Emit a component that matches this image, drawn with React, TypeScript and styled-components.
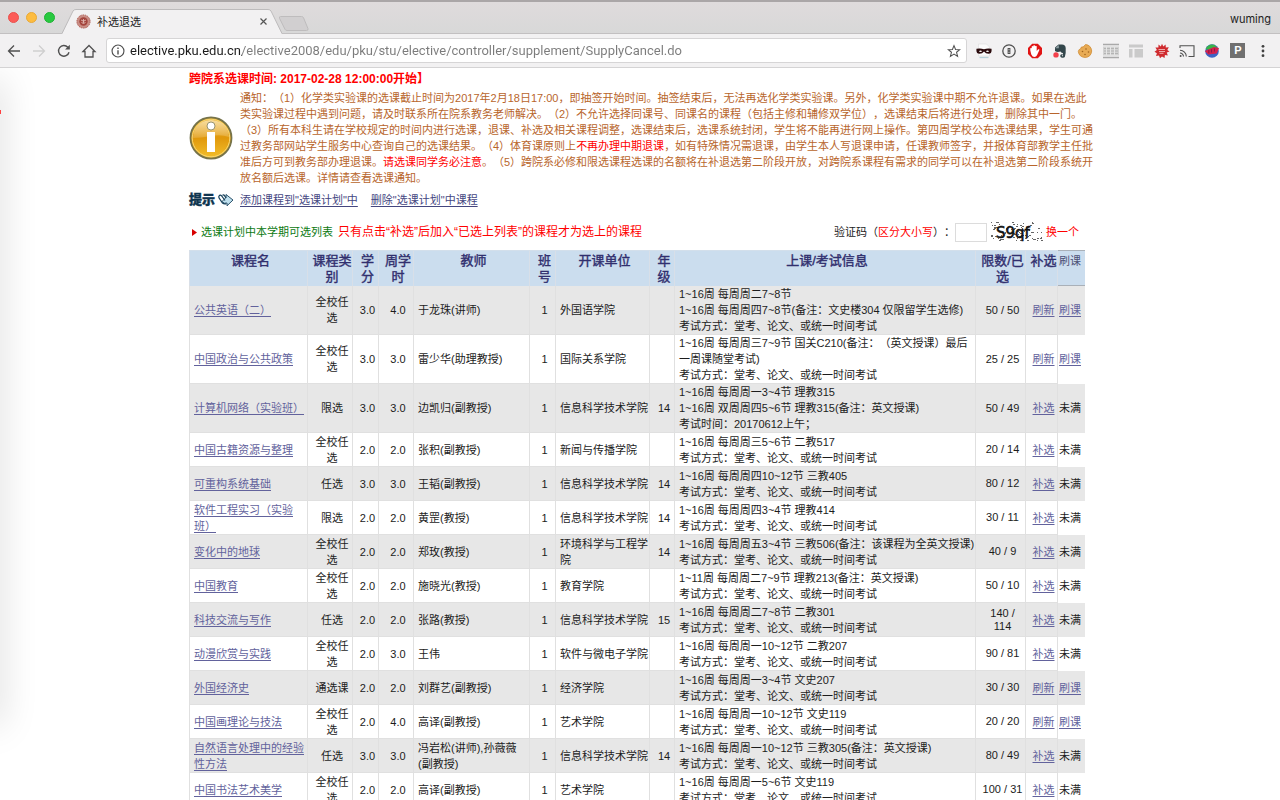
import React from "react";
import styled, { createGlobalStyle, css } from "styled-components";

const GlobalStyle = createGlobalStyle`
  *, *::before, *::after { box-sizing: border-box; }
  html, body { margin: 0; background: #fff; }
  body {
    font-family: "Liberation Sans", "Noto Sans CJK SC", sans-serif;
    font-size: 11px;
    line-height: 16px;
    color: #1c1c1c;
    text-spacing-trim: space-all;
  }
`;

/* ---------- browser window ---------- */

const Window = styled.div`
  display: flex;
  flex-direction: column;
  height: 100vh;
  overflow: hidden;
`;

const TabStrip = styled.div`
  display: flex;
  align-items: flex-end;
  height: 34px;
  flex: none;
  padding: 0 9px 0 8px;
  background: linear-gradient(#dfdbdc, #d8d8d8);
  border-top: 2px solid #aaa6a7;
  border-bottom: 1px solid #c2c0c1;
`;

const Lights = styled.div`
  display: flex;
  gap: 7px;
  align-self: center;
  width: 54px;
`;

const Light = styled.button<{ $color: string; $edge: string }>`
  width: 11px;
  height: 11px;
  padding: 0;
  border-radius: 50%;
  border: 1px solid ${(p) => p.$edge};
  background: ${(p) => p.$color};
`;

const Tab = styled.div`
  position: relative;
  display: flex;
  align-items: center;
  width: 222px;
  height: 25px;
  margin-bottom: -1px;
  padding: 0 17px 0 14px;
`;

const TabShape = styled.svg`
  position: absolute;
  inset: 0;
`;

const TabTitle = styled.span`
  position: relative;
  flex: 1;
  margin-left: 6px;
  font-size: 11px;
  color: #222;
`;

const Favicon = styled.svg`
  position: relative;
  flex: none;
`;

const PlainButton = styled.button`
  position: relative;
  display: flex;
  align-items: center;
  justify-content: center;
  padding: 0;
  border: 0;
  background: none;
  color: #505050;
`;

const NewTab = styled(PlainButton)`
  align-self: center;
  margin-left: -6px;
  margin-top: 12px;
`;

const Profile = styled(PlainButton)`
  align-self: center;
  margin-left: auto;
  margin-top: 2px;
  font: 11px/16px Inter, "Liberation Sans", sans-serif;
  color: #222;
`;

const Toolbar = styled.div`
  display: flex;
  align-items: center;
  height: 34px;
  flex: none;
  padding: 0 4px 0 1px;
  background: #f2f1f2;
  border-bottom: 1px solid #d4d3d4;
`;

const NavButtons = styled.div`
  display: grid;
  grid-template-columns: repeat(4, 25px);
  margin-right: 5px;
`;

const Address = styled.div`
  display: flex;
  align-items: center;
  flex: 1;
  gap: 5px;
  height: 25px;
  margin-right: 4px;
  padding: 0 5px 0 4px;
  border: 1px solid #d6d5d6;
  border-radius: 3px;
  background: #fff;
`;

const Url = styled.input`
  flex: 1;
  min-width: 0;
  height: 20px;
  padding: 0;
  border: 0;
  outline: 0;
  font: 13px/20px Roboto, "Liberation Sans", sans-serif;
  color: #777;
  background: linear-gradient(90deg, #1a1a1a 112px, #7b7b7b 112px);
  background-clip: text;
  -webkit-text-fill-color: transparent;
`;

const Extensions = styled.div`
  display: grid;
  grid-template-columns: repeat(12, 1fr);
  width: 305px;
`;

/* ---------- page ---------- */

const Viewport = styled.main`
  position: relative;
  flex: 1;
  min-height: 0;
  overflow: hidden;
  padding: 0 6px 0 0;
`;

const DrawerShadow = styled.div`
  position: absolute;
  left: -20px;
  top: 12px;
  bottom: 75px;
  width: 20px;
  box-shadow: 0 0 36px rgba(0, 0, 0, 0.17);
`;

const DrawerEdge = styled.div`
  position: absolute;
  left: 0;
  top: 42px;
  width: 1px;
  height: 4px;
  background: #ff4040;
`;

const Content = styled.div`
  max-width: 896px;
  margin: 0 auto;
`;

const OpeningTime = styled.h2`
  margin: 0;
  font-size: 12px;
  line-height: 22px;
  font-weight: bold;
  color: #f00;
`;

const Notice = styled.section`
  display: flex;
  align-items: center;
  gap: 7px;
`;

const NoticeIcon = styled.svg`
  flex: none;
`;

const NoticeText = styled.p`
  margin: 0;
  white-space: nowrap;
  color: #b8652b;
`;

const Warn = styled.span`
  color: #f00;
`;

const TipRow = styled.section`
  display: flex;
  align-items: center;
  height: 28px;
`;

const TipLabel = styled.strong`
  font-size: 13px;
  font-weight: 900;
  color: #0f3550;
  -webkit-text-stroke: 0.4px #0f3550;
`;

const TipHand = styled.svg`
  margin: 0 6px 0 3px;
`;

const Link = styled.a`
  color: #62629c;
  text-decoration: underline;
  text-underline-offset: 2px;
`;

const PlanLink = styled(Link)`
  margin-right: 13px;
  color: #44467f;
`;

const ListHead = styled.section`
  display: flex;
  align-items: center;
  height: 36px;
  padding: 0 6px 0 3px;
`;

const ListTitle = styled.h3`
  margin: 0 5px 0 4px;
  font-size: 11px;
  font-weight: normal;
  color: #0c7a12;
`;

const ListHint = styled.span`
  font-size: 12px;
  color: #f00;
`;

const Captcha = styled.form`
  display: flex;
  align-items: center;
  margin-left: auto;
`;

const CaptchaInput = styled.input`
  width: 32px;
  height: 19px;
  margin-right: 4px;
  padding: 0 2px;
  border: 1px solid #dcdcdc;
  font: inherit;
`;

const CaptchaSwap = styled.a`
  margin-left: 3px;
  color: #f00;
  text-decoration: none;
`;

const CourseTable = styled.table`
  width: 100%;
  table-layout: fixed;
  border-collapse: separate;
  border-spacing: 0;
`;

const HeadCell = styled.th<{ $plain?: boolean }>`
  height: 36px;
  padding: 2px 0 1px 4px;
  vertical-align: top;
  font-size: 13px;
  line-height: 16px;
  font-weight: 400;
  color: #312f6e;
  background: #cbddee;
  border-right: 1px solid #d8dfe8;
  border-top: 1px solid #d3dfeb;
  -webkit-text-stroke: 0.4px #312f6e;
  &:first-child { border-left: 1px solid #d8dfe8; }
  ${(p) =>
    p.$plain &&
    css`
      padding: 2px 1px 1px;
      font-size: 11px;
      text-align: left;
      color: #4c4f75;
      -webkit-text-stroke: 0;
      border-top: 1px solid #a9b0b8;
      border-bottom: 1px solid #a9b0b8;
      border-right: 0;
    `}
`;

const Row = styled.tr`
  background: #fff;
  &:nth-child(odd) { background: #e7e7e7; }
`;

const Cell = styled.td<{ $align?: "center"; $bare?: boolean }>`
  height: 34px;
  padding: 0 0 0 4px;
  vertical-align: middle;
  text-align: ${(p) => p.$align ?? "left"};
  border-right: 1px solid #e0e0e0;
  border-bottom: 1px solid #e0e0e0;
  &:first-child { border-left: 1px solid #e0e0e0; }
  ${(p) =>
    p.$bare &&
    css`
      padding: 0 1px;
      border-right: 0;
      border-bottom-color: transparent;
    `}
`;

const QuotaCell = styled(Cell)`
  line-height: 13px;
`;

const Line = styled.div`
  white-space: nowrap;
`;

/* ---------- data ---------- */

const columns: [string, number][] = [
  ["课程名", 119],
  ["课程类别", 45],
  ["学分", 26],
  ["周学时", 35],
  ["教师", 116],
  ["班号", 26],
  ["开课单位", 94],
  ["年级", 25],
  ["上课/考试信息", 301],
  ["限数/已选", 50],
  ["补选", 32],
  ["刷课", 27],
];

const EXAM = "考试方式：堂考、论文、或统一时间考试";

type Course = {
  name: string;
  kind: string;
  credit: string;
  hours: string;
  teacher: string;
  unit: string;
  grade?: string;
  info: string[];
  quota: string;
  full?: boolean;
};

const courses: Course[] = [
  { name: "公共英语（二）", kind: "全校任选", credit: "3.0", hours: "4.0", teacher: "于龙珠(讲师)", unit: "外国语学院", info: ["1~16周 每周周二7~8节", "1~16周 每周周四7~8节(备注：文史楼304 仅限留学生选修)", EXAM], quota: "50 / 50", full: true },
  { name: "中国政治与公共政策", kind: "全校任选", credit: "3.0", hours: "3.0", teacher: "雷少华(助理教授)", unit: "国际关系学院", info: ["1~16周 每周周三7~9节 国关C210(备注：（英文授课）最后", "一周课随堂考试)", EXAM], quota: "25 / 25", full: true },
  { name: "计算机网络（实验班）", kind: "限选", credit: "3.0", hours: "3.0", teacher: "边凯归(副教授)", unit: "信息科学技术学院", grade: "14", info: ["1~16周 每周周一3~4节 理教315", "1~16周 双周周四5~6节 理教315(备注：英文授课)", "考试时间：20170612上午；"], quota: "50 / 49" },
  { name: "中国古籍资源与整理", kind: "全校任选", credit: "2.0", hours: "2.0", teacher: "张积(副教授)", unit: "新闻与传播学院", info: ["1~16周 每周周三5~6节 二教517", EXAM], quota: "20 / 14" },
  { name: "可重构系统基础", kind: "任选", credit: "3.0", hours: "3.0", teacher: "王韬(副教授)", unit: "信息科学技术学院", grade: "14", info: ["1~16周 每周周四10~12节 三教405", EXAM], quota: "80 / 12" },
  { name: "软件工程实习（实验班）", kind: "限选", credit: "2.0", hours: "2.0", teacher: "黄罡(教授)", unit: "信息科学技术学院", grade: "14", info: ["1~16周 每周周四3~4节 理教414", EXAM], quota: "30 / 11" },
  { name: "变化中的地球", kind: "全校任选", credit: "2.0", hours: "2.0", teacher: "郑玫(教授)", unit: "环境科学与工程学院", grade: "14", info: ["1~16周 每周周五3~4节 三教506(备注：该课程为全英文授课)", EXAM], quota: "40 / 9" },
  { name: "中国教育", kind: "全校任选", credit: "2.0", hours: "2.0", teacher: "施晓光(教授)", unit: "教育学院", info: ["1~11周 每周周二7~9节 理教213(备注：英文授课)", EXAM], quota: "50 / 10" },
  { name: "科技交流与写作", kind: "任选", credit: "2.0", hours: "2.0", teacher: "张路(教授)", unit: "信息科学技术学院", grade: "15", info: ["1~16周 每周周二7~8节 二教301", EXAM], quota: "140 / 114" },
  { name: "动漫欣赏与实践", kind: "全校任选", credit: "2.0", hours: "3.0", teacher: "王伟", unit: "软件与微电子学院", info: ["1~16周 每周周一10~12节 二教207", EXAM], quota: "90 / 81" },
  { name: "外国经济史", kind: "通选课", credit: "2.0", hours: "2.0", teacher: "刘群艺(副教授)", unit: "经济学院", info: ["1~16周 每周周一3~4节 文史207", EXAM], quota: "30 / 30", full: true },
  { name: "中国画理论与技法", kind: "全校任选", credit: "2.0", hours: "4.0", teacher: "高译(副教授)", unit: "艺术学院", info: ["1~16周 每周周一10~12节 文史119", EXAM], quota: "20 / 20", full: true },
  { name: "自然语言处理中的经验性方法", kind: "任选", credit: "3.0", hours: "3.0", teacher: "冯岩松(讲师),孙薇薇(副教授)", unit: "信息科学技术学院", grade: "14", info: ["1~16周 每周周一10~12节 三教305(备注：英文授课)", EXAM], quota: "80 / 49" },
  { name: "中国书法艺术美学", kind: "全校任选", credit: "2.0", hours: "2.0", teacher: "高译(副教授)", unit: "艺术学院", info: ["1~16周 每周周一5~6节 文史119", EXAM], quota: "100 / 31" },
];

/* ---------- icons ---------- */

type IconProps = { children: React.ReactNode; size?: number };
const Icon = ({ children, size = 16 }: IconProps) => (
  <svg width={size} height={size} viewBox="0 0 16 16" fill="none" stroke="#505050" strokeWidth="1.3" aria-hidden="true">
    {children}
  </svg>
);

const star = "M8 1.800l1.800 4.400 4.700.3-3.600 3 1.200 4.600L8 11.600l-4.100 2.500 1.200-4.600-3.600-3 4.700-.3z";
const burst =
  "M8 .8l1.300 2.700L11.600 1.600l.2 3 3-.3-1.500 2.600 2.200 1.700-2.700 1 1 2.900-2.900-.4-.3 3-2.600-1.700L6 15.300l-1-2.800-3 .6.9-2.900L.5 8.800l2.400-1.700L1.400 4.500l3 .1.100-3 2.300 1.900z";

const extensions: [string, React.ReactNode][] = [
  ["隐身", <Icon key="i"><path d="M2.500 1h8l3 3v9h-11z" fill="#fbfbfb" stroke="#dcdcdc" strokeWidth=".6" /><path d="M3.500 14.500h9" stroke="#b7d0d8" /><path d="M.5 5.700q4.100-.8 7.500.5 3.400-1.300 7.500-.5.700 5-3 5-2.900 0-4.500-2.200-1.600 2.200-4.500 2.200-3.700 0-3-5z" fill="#2a0a0c" stroke="none" /><path d="M2.800 8.200q1.800-1.600 3.400 0-1.800 1.400-3.400 0zM9.800 8.200q1.600-1.600 3.400 0-1.600 1.400-3.400 0z" fill="#fff" stroke="none" /></Icon>],
  ["密码", <Icon key="i"><circle cx="8" cy="8" r="6.200" /><path d="M8 5v6" strokeWidth="2.800" /><path d="M8 6v1.300M8 8.700v1.300" stroke="#eee" strokeWidth=".8" /></Icon>],
  ["拦截", <Icon key="i"><path d="M5.200 .8h5.600l4.200 4.200v6l-4.200 4.200H5.200L1 11V5z" fill="#e11414" stroke="none" /><path d="M4.300 11.500L3.300 7.500V5.300q.8-.8 1.400 0V3.500q.9-.9 1.600 0v-.9q.9-.8 1.700 0v.6q.9-.7 1.700 0v4.800l1.500-1.800q1.200-.3 1.300.6l-2.400 5.300q-.9 2-2.700 2-1.900 0-3.100-2.600z" fill="#fff" stroke="none" /></Icon>],
  ["笔记", <Icon key="i"><path d="M3 4.500L6.500 1.500h3.500q3.500.3 3.700 3.500.4 5-.8 8.700-.5 1.300-2.600 1.100-2.400-.3-2-2.500.6-1.600 2.500-1v1q-1.200-.2-1 .8.800.7 1.300-.6l-.2-2.500Q9.500 10 8.500 8.500 5 9.500 3 8z" fill="#33464b" stroke="none" /><path d="M3.200 5.200L6.800 2v3.200z" fill="#8fa0a4" stroke="none" /><circle cx="4" cy="11.900" r="2.700" fill="#f2404b" stroke="none" /></Icon>],
  ["饼干", <Icon key="i"><path d="M8.500 1.500Q14 2 14.700 8q-.6 6-6.500 6.500Q2 14 1.300 8.500 1.700 6 3.500 6 4 3 6.200 4z" fill="#e8ab55" stroke="#cf8b35" strokeWidth=".8" /><g fill="#a0631f" stroke="none"><circle cx="5.500" cy="8.500" r=".8" /><circle cx="9" cy="6" r=".8" /><circle cx="11.500" cy="9" r=".8" /><circle cx="8" cy="11.500" r=".8" /></g></Icon>],
  ["书签", <Icon key="i"><path d="M0 1.500h16M0 14.500h16" stroke="#a9a9a9" strokeWidth="1.600" /><path d="M0 3.500h16v9H0z" fill="#d2d2d2" stroke="none" /><path d="M1 5.500h14M1 8h14M1 10.500h14" stroke="#b4b4b4" strokeWidth="1" /><path d="M3.500 4v8M7.500 4v8M11.500 4v8" stroke="#e6e6e6" strokeWidth="1" /></Icon>],
  ["布局", <Icon key="i"><path d="M1 1.500h14v3H1zM1 6h3.500v8.500H1zM6.500 6H15v8.500H6.500z" fill="#cacaca" stroke="none" /></Icon>],
  ["星芒", <Icon key="i"><path d={burst} fill="#cf2b2f" stroke="none" /><path d="M4.500 6.500h6.500M5 8.500h6M5.500 10.300h4" stroke="#f3b7b8" strokeWidth=".9" /></Icon>],
  ["投屏", <Icon key="i"><path d="M1 5V2.700h14v10.800H9.500" strokeWidth="1.100" /><path d="M1 7.200a6.300 6.300 0 0 1 6.300 6.300M1 10a3.500 3.500 0 0 1 3.500 3.500" strokeWidth="1.100" /><circle cx="1.600" cy="13" r="1" fill="#505050" stroke="none" /></Icon>],
  ["彩球", <Icon key="i"><circle cx="8" cy="8" r="6.800" fill="#3c63c4" stroke="none" /><path d="M1.500 6Q4.500 0 10.500 1.800L13.500 5 5 7z" fill="#38b34a" stroke="none" /><path d="M.8 8l9.200-4 5 1-2.200 5.500-8.500 1z" fill="#d5204c" stroke="none" /><path d="M4.800 7v3.200M7.500 6.300v3.200M10.500 5.500v3" stroke="#8a1a4a" strokeWidth="1.100" /></Icon>],
];

const ParkingIcon = styled.span`
  display: flex;
  align-items: center;
  justify-content: center;
  width: 15px;
  height: 15px;
  background: #707070;
  color: #fff;
  font: bold 11px/15px "Liberation Sans", sans-serif;
`;

const speckles = Array.from({ length: 90 }, (_, i) => {
  const a = Math.abs(Math.sin(i * 12.9898) * 43758.5453) % 1;
  const b = Math.abs(Math.sin(i * 78.233) * 12543.123) % 1;
  return { x: Math.floor(a * 51), y: Math.floor(b * 19) + 1, w: 1 + (i % 2) };
});

const keep = (e: React.SyntheticEvent) => e.preventDefault();

export default function App() {
  return (
    <Window>
      <GlobalStyle />
      <TabStrip>
        <Lights>
          <Light $color="#fc5b57" $edge="#e9524e" aria-label="关闭窗口" />
          <Light $color="#fdbc40" $edge="#e9a935" aria-label="最小化" />
          <Light $color="#28c940" $edge="#1fb234" aria-label="全屏" />
        </Lights>
        <Tab>
          <TabShape width="222" height="25" viewBox="0 0 222 25" aria-hidden="true">
            <path d="M0 25L11 2Q12 .5 14 .5H206Q208 .5 209 2L220 25z" fill="#f2f1f2" />
            <path d="M0 24.500L11 2Q12 .5 14 .5H206Q208 .5 209 2L220 24.500" fill="none" stroke="#bdbbbc" />
          </TabShape>
          <Favicon width="15" height="15" viewBox="0 0 15 15" aria-hidden="true">
            <circle cx="7.500" cy="7.500" r="6.600" fill="#c98d84" stroke="#a9544c" strokeWidth=".9" strokeDasharray="1.500 .8" />
            <circle cx="7.500" cy="7.500" r="4.200" fill="#a3443d" />
            <path d="M5 6l2.500 1.200L10 6M5.500 8.500q2 2 4 0M7.500 5v4" stroke="#e8c8c2" strokeWidth=".8" fill="none" />
          </Favicon>
          <TabTitle>补选退选</TabTitle>
          <PlainButton aria-label="关闭标签页">
            <svg width="7" height="7" viewBox="0 0 7 7" stroke="#555" strokeWidth="1.200"><path d="M.5.5l6 6M6.500.5l-6 6" /></svg>
          </PlainButton>
        </Tab>
        <NewTab aria-label="新标签页">
          <svg width="31" height="15" viewBox="0 0 31 15"><path d="M2.500.5h21q1.500 0 2 1.200l4.500 11q.5 1.800-1.500 1.800H9q-1.500 0-2-1.200l-5.500-11Q1 .5 2.500.5z" fill="#d1cfd0" stroke="#bebcbd" /></svg>
        </NewTab>
        <Profile>wuming</Profile>
      </TabStrip>

      <Toolbar>
        <NavButtons>
          <PlainButton aria-label="后退"><Icon><path d="M14 8H2.500M8 2.500L2.500 8 8 13.500" /></Icon></PlainButton>
          <PlainButton aria-label="前进"><Icon><path d="M2 8h11.500M8 2.500L13.500 8 8 13.500" stroke="#cfcfcf" /></Icon></PlainButton>
          <PlainButton aria-label="刷新"><Icon><path d="M13 9.200A5.300 5.300 0 1 1 11.800 4.300L13 5.500" strokeWidth="1.400" /><path d="M13.800 1.800v4.700H9.100z" fill="#505050" stroke="none" /></Icon></PlainButton>
          <PlainButton aria-label="主页"><Icon><path d="M2 8.500L8 2.500l6 6h-2V14H4V8.500z" /></Icon></PlainButton>
        </NavButtons>
        <Address>
          <Icon size={14}><circle cx="8" cy="8" r="6.800" /><path d="M8 7v5M8 4v1.700" strokeWidth="1.600" /></Icon>
          <Url aria-label="地址" spellCheck={false} defaultValue="elective.pku.edu.cn/elective2008/edu/pku/stu/elective/controller/supplement/SupplyCancel.do" />
          <PlainButton aria-label="收藏"><Icon size={14}><path d={star} strokeWidth="1.200" /></Icon></PlainButton>
        </Address>
        <Extensions>
          {extensions.map(([label, icon]) => (
            <PlainButton key={label} aria-label={label}>{icon}</PlainButton>
          ))}
          <PlainButton aria-label="停车"><ParkingIcon>P</ParkingIcon></PlainButton>
          <PlainButton aria-label="菜单"><Icon><g fill="#404040" stroke="none"><circle cx="8" cy="3.300" r="1.400" /><circle cx="8" cy="8" r="1.400" /><circle cx="8" cy="12.700" r="1.400" /></g></Icon></PlainButton>
        </Extensions>
      </Toolbar>

      <Viewport>
        <DrawerShadow />
        <DrawerEdge />
        <Content>
          <OpeningTime>跨院系选课时间: 2017-02-28 12:00:00开始】</OpeningTime>

          <Notice>
            <NoticeIcon width="44" height="44" viewBox="0 0 44 44" aria-hidden="true">
              <defs>
                <linearGradient id="gold" x1="0" y1="0" x2="0" y2="1">
                  <stop offset="0" stopColor="#f0b62e" />
                  <stop offset=".5" stopColor="#e0980c" />
                  <stop offset="1" stopColor="#f3c02c" />
                </linearGradient>
                <linearGradient id="gloss" x1="0" y1="0" x2="0" y2="1">
                  <stop offset="0" stopColor="#fff" stopOpacity=".55" />
                  <stop offset="1" stopColor="#fff" stopOpacity=".15" />
                </linearGradient>
              </defs>
              <circle cx="22" cy="22" r="20.500" fill="url(#gold)" stroke="#76734a" strokeWidth="1.800" />
              <circle cx="22" cy="22" r="18.800" fill="none" stroke="#f7d774" strokeWidth="1" />
              <path d="M4 22Q5 5 22 4q17 1 18 17-8-3-18-1T4 22z" fill="url(#gloss)" />
              <circle cx="22" cy="10" r="4" fill="#fff" stroke="#8d8a66" strokeWidth=".9" />
              <path d="M18 16h8v20h-8z" fill="#fff" />
            </NoticeIcon>
            <NoticeText>
              通知：（1）化学类实验课的选课截止时间为2017年2月18日17:00，即抽签开始时间。抽签结束后，无法再选化学类实验课。另外，化学类实验课中期不允许退课。如果在选此<br />
              类实验课过程中遇到问题，请及时联系所在院系教务老师解决。（2）不允许选择同课号、同课名的课程（包括主修和辅修双学位），选课结束后将进行处理，删除其中一门。<br />
              （3）所有本科生请在学校规定的时间内进行选课，退课、补选及相关课程调整，选课结束后，选课系统封闭，学生将不能再进行网上操作。第四周学校公布选课结果，学生可通<br />
              过教务部网站学生服务中心查询自己的选课结果。（4）体育课原则上<Warn>不再办理中期退课</Warn>，如有特殊情况需退课，由学生本人写退课申请，任课教师签字，并报体育部教学主任批<br />
              准后方可到教务部办理退课。<Warn>请选课同学务必注意</Warn>。（5）跨院系必修和限选课程选课的名额将在补退选第二阶段开放，对跨院系课程有需求的同学可以在补退选第二阶段系统开<br />
              放名额后选课。详情请查看选课通知。
            </NoticeText>
          </Notice>

          <TipRow>
            <TipLabel>提示</TipLabel>
            <TipHand width="16" height="14" viewBox="0 0 16 14" aria-hidden="true">
              <path d="M8 4.500V1.500L15 7 9 12.800V10q-3 1.200-5-1.500z" fill="#bfe0ee" stroke="#17405a" strokeWidth=".9" />
              <path d="M1 3q1.200-1.500 2.500-.3L7 7.500M1 3q-.5 1.300.5 2.700L4.500 10q1.500 1.300 3.500.8M4.500 2.300q1.300-.8 2 .3L8 5" fill="none" stroke="#17405a" strokeWidth="1.200" />
            </TipHand>
            <PlanLink href="#add" onClick={keep}>添加课程到"选课计划"中</PlanLink>
            <PlanLink href="#remove" onClick={keep}>删除"选课计划"中课程</PlanLink>
          </TipRow>

          <ListHead>
            <svg width="5" height="7" viewBox="0 0 5 7" aria-hidden="true"><path d="M0 0l5 3.500L0 7z" fill="#d80000" /></svg>
            <ListTitle>选课计划中本学期可选列表</ListTitle>
            <ListHint>只有点击“补选”后加入“已选上列表”的课程才为选上的课程</ListHint>
            <Captcha onSubmit={keep}>
              <label htmlFor="captcha">验证码（<Warn>区分大小写</Warn>）：</label>
              <CaptchaInput id="captcha" />
              <svg width="52" height="22" viewBox="0 0 52 22" role="img" aria-label="验证码图片">
                {speckles.map((s, i) => (
                  <rect key={i} x={s.x} y={s.y} width={s.w} height="1" fill="#666" />
                ))}
                <g fontFamily="DejaVu Sans" fontSize="15" fill="#111" stroke="#111" strokeWidth=".6">
                  <text x="5" y="17">S9qf</text>
                </g>
              </svg>
              <CaptchaSwap href="#captcha" onClick={keep}>换一个</CaptchaSwap>
            </Captcha>
          </ListHead>

          <CourseTable>
            <colgroup>
              {columns.map(([label, width]) => (
                <col key={label} width={width} />
              ))}
            </colgroup>
            <thead>
              <tr>
                {columns.map(([label], i) => (
                  <HeadCell key={label} scope="col" $plain={i === columns.length - 1}>{label}</HeadCell>
                ))}
              </tr>
            </thead>
            <tbody>
              {courses.map((c) => (
                <Row key={c.name}>
                  <Cell><Link href="#course" onClick={keep}>{c.name}</Link></Cell>
                  <Cell $align="center">{c.kind}</Cell>
                  <Cell $align="center">{c.credit}</Cell>
                  <Cell $align="center">{c.hours}</Cell>
                  <Cell>{c.teacher}</Cell>
                  <Cell $align="center">1</Cell>
                  <Cell>{c.unit}</Cell>
                  <Cell $align="center">{c.grade}</Cell>
                  <Cell>{c.info.map((line) => <Line key={line}>{line}</Line>)}</Cell>
                  <QuotaCell $align="center">{c.quota}</QuotaCell>
                  <Cell $align="center"><Link href="#elect" onClick={keep}>{c.full ? "刷新" : "补选"}</Link></Cell>
                  <Cell $bare>{c.full ? <Link href="#watch" onClick={keep}>刷课</Link> : "未满"}</Cell>
                </Row>
              ))}
            </tbody>
          </CourseTable>
        </Content>
      </Viewport>
    </Window>
  );
}
